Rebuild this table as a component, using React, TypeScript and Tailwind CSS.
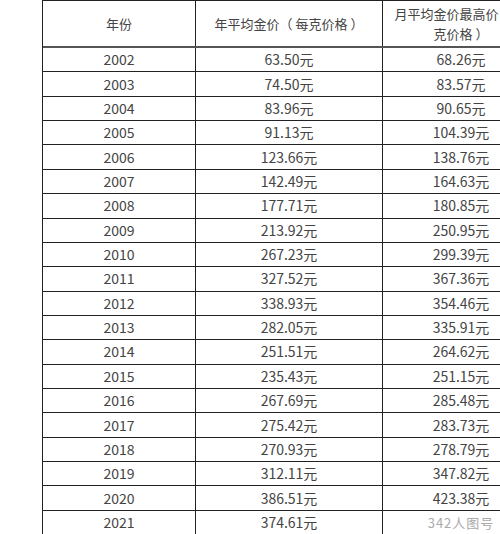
import React from 'react';

const rows: [string, string, string][] = [
  ['2002', '63.50元', '68.26元'],
  ['2003', '74.50元', '83.57元'],
  ['2004', '83.96元', '90.65元'],
  ['2005', '91.13元', '104.39元'],
  ['2006', '123.66元', '138.76元'],
  ['2007', '142.49元', '164.63元'],
  ['2008', '177.71元', '180.85元'],
  ['2009', '213.92元', '250.95元'],
  ['2010', '267.23元', '299.39元'],
  ['2011', '327.52元', '367.36元'],
  ['2012', '338.93元', '354.46元'],
  ['2013', '282.05元', '335.91元'],
  ['2014', '251.51元', '264.62元'],
  ['2015', '235.43元', '251.15元'],
  ['2016', '267.69元', '285.48元'],
  ['2017', '275.42元', '283.73元'],
  ['2018', '270.93元', '278.79元'],
  ['2019', '312.11元', '347.82元'],
  ['2020', '386.51元', '423.38元'],
  ['2021', '374.61元', ''],
];

export default function App() {
  return (
    <div
      className="relative w-[500px] h-[534px] overflow-hidden bg-white text-[#444]"
      style={{ fontFamily: '"Noto Sans CJK SC", "Noto Sans", sans-serif' }}
    >
      <div className="ml-[42px] w-[500px] border-l border-[#222]">
        {/* Header */}
        <div className="flex h-[48px] border-t border-b-2 border-t-[#222] border-b-[#555] text-[13px]">
          <div className="w-[153px] shrink-0 border-r border-[#222] flex items-center justify-center">
            年份
          </div>
          <div className="w-[187px] shrink-0 border-r border-[#222] flex items-center justify-center whitespace-nowrap">
            年平均金价（ 每克价格 ）
          </div>
          <div className="w-[156px] shrink-0 flex items-center justify-center text-center leading-[20px] px-[10px]">
            月平均金价最高价（ 每克价格 ）
          </div>
        </div>

        {/* Rows */}
        {rows.map(([year, avg, high]) => (
          <div key={year} className="flex h-[24.37px] border-b border-[#222] text-[14px]">
            <div className="w-[153px] shrink-0 border-r border-[#222] flex items-center justify-center">
              {year}
            </div>
            <div className="w-[187px] shrink-0 border-r border-[#222] flex items-center justify-center">
              {avg}
            </div>
            <div className="w-[156px] shrink-0 flex items-center justify-center">
              {high || <span className="text-[13px] text-[#aaa] tracking-[1px]">342人图号</span>}
            </div>
          </div>
        ))}
      </div>
    </div>
  );
}
